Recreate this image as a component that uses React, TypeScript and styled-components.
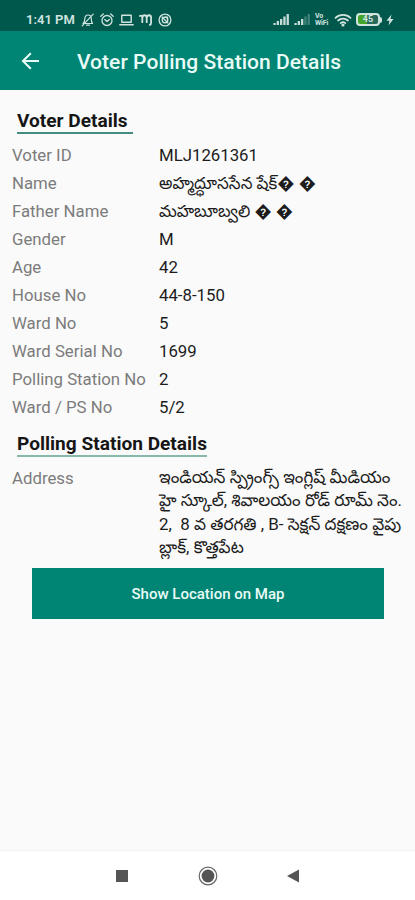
import React from "react";
import styled, { createGlobalStyle } from "styled-components";

const GlobalStyle = createGlobalStyle`
  * { box-sizing: border-box; }
  body { margin: 0; background: #fafafa; }
`;

const Screen = styled.div`
  width: 415px;
  height: 900px;
  display: flex;
  flex-direction: column;
  overflow: hidden;
  background: #fafafa;
  color: #1c1c1c;
  font-family: Roboto, "Noto Sans Telugu", "Noto Sans", sans-serif;
`;

const StatusBar = styled.header`
  height: 31px;
  flex: none;
  display: flex;
  align-items: center;
  justify-content: space-between;
  padding: 8px 21px 0 26px;
  background: #00574b;
  color: #d0e4e0;
`;

const StatusGroup = styled.div<{ $gap: number }>`
  display: flex;
  align-items: center;
  gap: ${(p) => p.$gap}px;
  svg { display: block; flex: none; }
`;

const Clock = styled.span`
  width: 50px;
  font-size: 13px;
  line-height: 16px;
  font-weight: 600;
  white-space: nowrap;
`;

const VoWifi = styled.span`
  width: 15px;
  font-size: 7px;
  line-height: 6.5px;
  font-weight: 700;
  letter-spacing: -0.1px;
`;

const AppBar = styled.div`
  height: 59px;
  flex: none;
  display: flex;
  align-items: center;
  padding: 2px 20px 0 19px;
  gap: 34px;
  background: #008574;
  color: #e9fbf6;
  svg { flex: none; margin-top: -2px; }
`;

const Title = styled.h1`
  margin: 0;
  font-size: 21px;
  line-height: 28px;
  font-weight: 500;
  letter-spacing: 0.04px;
  white-space: nowrap;
`;

const Content = styled.main`
  flex: 1;
  display: flex;
  flex-direction: column;
  padding: 19px 0 0 12px;
`;

const SectionTitle = styled.h2<{ $width: number; $line: string }>`
  width: ${(p) => p.$width}px;
  height: 25px;
  margin: 0 0 0 5px;
  border-bottom: 2px solid ${(p) => p.$line};
  font-size: 19.1px;
  line-height: 24px;
  font-weight: 700;
  color: #161616;
  white-space: nowrap;
`;

const Details = styled.dl`
  margin: 7px 0 11px;
`;

const Row = styled.div`
  display: grid;
  grid-template-columns: 147px 1fr;
  min-height: 28px;
  align-items: center;
  font-size: 16.8px;
  line-height: 28px;
  white-space: nowrap;
`;

const Label = styled.dt`
  color: #7c7c7c;
`;

const Value = styled.dd`
  margin: 0;
  color: #1c1c1c;
`;

const AddressRow = styled(Row)`
  align-items: start;
  margin-top: 7px;
`;

const AddressLines = styled(Value)`
  display: flex;
  flex-direction: column;
  padding-top: 2px;
`;

const AddressLine = styled.span`
  height: 23.4px;
  line-height: 23.4px;
  font-size: 16.95px;
  white-space: pre;
`;

const MapButton = styled.button`
  width: 352px;
  height: 51px;
  margin: 8px 0 0 20px;
  padding: 2px 0 0;
  border: 0;
  background: #008574;
  color: #e9fbf6;
  font-family: inherit;
  font-size: 15px;
  font-weight: 500;
`;

const NavBar = styled.nav`
  height: 50px;
  flex: none;
  display: flex;
  align-items: center;
  padding: 0 114px;
  justify-content: space-between;
  border-top: 1px solid #f3f3f3;
  background: #ffffff;
  svg { display: block; }
`;

const voter = [
  { label: "Voter ID", value: "MLJ1261361" },
  { label: "Name", value: "అహ్మద్ధూససేన షేక్\uFFFD \uFFFD" },
  { label: "Father Name", value: "మహబూబ్వలి \uFFFD \uFFFD" },
  { label: "Gender", value: "M" },
  { label: "Age", value: "42" },
  { label: "House No", value: "44-8-150" },
  { label: "Ward No", value: "5" },
  { label: "Ward Serial No", value: "1699" },
  { label: "Polling Station No", value: "2" },
  { label: "Ward / PS No", value: "5/2" },
];

const address = [
  "ఇండియన్ స్ప్రింగ్స్ ఇంగ్లిష్ మీడియం",
  "హై స్కూల్, శివాలయం రోడ్ రూమ్ నెం.",
  "2,  8 వ తరగతి , B- సెక్షన్ దక్షణం వైపు",
  "బ్లాక్, కొత్తపేట",
];

const stroke = { fill: "none", stroke: "currentColor", strokeLinecap: "round", strokeLinejoin: "round" } as const;

const MutedBell = () => (
  <svg width="14" height="14" viewBox="0 0 14 14" {...stroke} strokeWidth="1.2">
    <path d="M2 10.5h9.5c-1-1-1.2-2-1.2-4.7C10.3 3.5 9 2 7 2S3.8 3.5 3.8 5.8C3.8 8.5 3.5 9.5 2 10.5zM5.6 12.2h2.8M12.2 1.2 1.2 12.8" />
  </svg>
);
const Alarm = () => (
  <svg width="14" height="14" viewBox="0 0 14 14" {...stroke} strokeWidth="1.3">
    <circle cx="7" cy="7.5" r="5" /><path d="M.8 3.2 3.3 1M13.2 3.2 10.7 1M4.8 6.5 7 8.5l2.3-2" />
  </svg>
);
const Laptop = () => (
  <svg width="15" height="14" viewBox="0 0 15 14" {...stroke} strokeWidth="1.4">
    <path d="M2.8 2.3h9.4v7H2.8zM.8 11.7h13.4" />
  </svg>
);
const AppMark = () => (
  <svg width="14" height="14" viewBox="0 0 14 14" {...stroke} strokeWidth="1.8">
    <path d="M.8 3c1.5-1 2.5 0 2.5 1.5v4.7M3.3 4.8c.4-3.4 4.4-3.4 4.4 0v4.4M7.7 4.8c.4-3.4 4.4-3.4 4.4 0V9.4c0 1.5-.3 2-1.2 2.5" />
  </svg>
);
const RoundMark = () => (
  <svg width="14" height="14" viewBox="0 0 14 14" {...stroke} strokeWidth="1.3">
    <circle cx="7" cy="7" r="5.9" /><circle cx="7" cy="7" r="2.8" /><path d="m4 4 6 6M7 4.2h2.5V7" />
  </svg>
);
const Signal = ({ level }: { level: number }) => (
  <svg width="17" height="13" viewBox="0 0 17 13" fill="currentColor">
    {[2, 4, 6, 8.5, 11].map((h, i) => (
      <rect key={h} x={i * 3.3 + 0.4} y={12 - h} width="2.3" height={h} opacity={i < level ? 0.95 : 0.3} />
    ))}
  </svg>
);
const Wifi = () => (
  <svg width="18" height="14" viewBox="0 0 18 14" {...stroke} strokeWidth="1.8">
    <path d="M1.5 4.8c4.2-4 10.8-4 15 0M4.1 7.5c2.8-2.6 7-2.6 9.8 0M6.7 10.1c1.4-1.2 3.2-1.2 4.6 0" />
    <circle cx="9" cy="12" r=".7" fill="currentColor" />
  </svg>
);
const BatteryBox = styled.span`
  display: flex;
  align-items: center;
  &::after {
    content: "";
    width: 2px;
    height: 6px;
    border-radius: 0 2px 2px 0;
    background: currentColor;
  }
`;
const BatteryBody = styled.span`
  width: 24px;
  height: 13px;
  border: 2px solid currentColor;
  border-radius: 4px;
  background: linear-gradient(90deg, #43a62b 0 9px, #28695b 9px);
  font-size: 9px;
  line-height: 9px;
  font-weight: 700;
  text-align: center;
`;
const Bolt = () => (
  <svg width="8" height="12" viewBox="0 0 8 12" fill="currentColor">
    <path d="M5.5.5.5 6.7h3L2.5 11.5l5-6.4h-3z" />
  </svg>
);

export default function App() {
  return (
    <>
      <GlobalStyle />
      <Screen>
        <StatusBar>
          <StatusGroup $gap={5}>
            <Clock>1:41 PM</Clock>
            <MutedBell /><Alarm /><Laptop /><AppMark /><RoundMark />
          </StatusGroup>
          <StatusGroup $gap={4}>
            <Signal level={5} /><Signal level={3} />
            <VoWifi>Vo<br />WiFi</VoWifi>
            <Wifi />
            <BatteryBox><BatteryBody>45</BatteryBody></BatteryBox>
            <Bolt />
          </StatusGroup>
        </StatusBar>
        <AppBar>
          <svg width="24" height="24" viewBox="0 0 24 24" fill="none" stroke="currentColor" strokeWidth="2.1">
            <path d="M20 12H4.5M11.8 4.2 4 12l7.8 7.8" />
          </svg>
          <Title>Voter Polling Station Details</Title>
        </AppBar>
        <Content>
          <SectionTitle $width={116} $line="#438d80">Voter Details</SectionTitle>
          <Details>
            {voter.map((item) => (
              <Row key={item.label}>
                <Label>{item.label}</Label>
                <Value>{item.value}</Value>
              </Row>
            ))}
          </Details>
          <SectionTitle $width={190} $line="#86b8ab">Polling Station Details</SectionTitle>
          <AddressRow>
            <Label>Address</Label>
            <AddressLines>
              {address.map((line) => (
                <AddressLine key={line}>{line}</AddressLine>
              ))}
            </AddressLines>
          </AddressRow>
          <MapButton type="button">Show Location on Map</MapButton>
        </Content>
        <NavBar>
          <svg width="16" height="16" viewBox="0 0 16 16"><rect x="2" y="2" width="12" height="12" fill="#555" /></svg>
          <svg width="20" height="20" viewBox="0 0 20 20">
            <circle cx="10" cy="10" r="8.8" fill="none" stroke="#666" strokeWidth="1.2" />
            <circle cx="10" cy="10" r="6.4" fill="#555" />
          </svg>
          <svg width="16" height="16" viewBox="0 0 16 16"><path d="M2 8 14 1.5v13z" fill="#555" /></svg>
        </NavBar>
      </Screen>
    </>
  );
}
